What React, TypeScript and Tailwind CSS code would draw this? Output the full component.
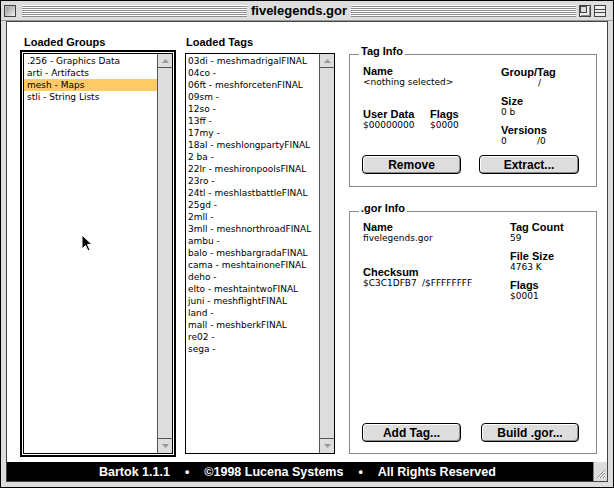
import React from 'react';

const groups = ['.256 - Graphics Data', 'arti - Artifacts', 'mesh - Maps', 'stli - String Lists'];

const tags = [
  '03di - meshmadrigalFINAL', '04co -', '06ft - meshforcetenFINAL', '09sm -', '12so -', '13ff -', '17my -',
  '18al - meshlongpartyFINAL', '2 ba -', '22lr - meshironpoolsFINAL', '23ro -', '24tl - meshlastbattleFINAL',
  '25gd -', '2mll -', '3mll - meshnorthroadFINAL', 'ambu -', 'balo - meshbargradaFINAL', 'cama - meshtainoneFINAL',
  'deho -', 'elto - meshtaintwoFINAL', 'juni - meshflightFINAL', 'land -', 'mall - meshberkFINAL', 're02 -', 'sega -',
];

const label = "font-['Liberation_Sans',Arial,sans-serif] font-bold text-[11px] leading-[11px] text-black whitespace-nowrap";
const value = "font-['DejaVu_Sans',sans-serif] text-[9px] leading-[10px] text-black whitespace-nowrap";

function Stripes() {
  return <div className="flex-1 h-[12px] bg-[repeating-linear-gradient(to_bottom,#ffffff_0_1px,#8c8c8c_1px_2px)]" />;
}

function TitleBar() {
  return (
    <div className="h-[20px] flex items-center pl-[3px] pr-[7px] border-b border-[#999]">
      <div className="w-[12px] h-[12px] border border-[#444] bg-[linear-gradient(135deg,#8f8f8f,#f4f4f4)] shadow-[inset_1px_1px_0_#bbbbbb]" />
      <div className="ml-[6px] flex-1 flex items-center">
        <Stripes />
        <span className="px-[4px] font-['Liberation_Sans',Arial,sans-serif] font-bold text-[13px] leading-[14px] text-black">
          fivelegends.gor
        </span>
        <Stripes />
      </div>
      <svg className="ml-[3px]" width="12" height="12" viewBox="0 0 12 12">
        <rect x="0.5" y="0.5" width="11" height="11" fill="#eeeeee" stroke="#444" />
        <rect x="1.5" y="1.5" width="6" height="6" fill="#dddddd" stroke="#444" />
        <path d="M2 10.5 H10.5 V2" fill="none" stroke="#888" />
      </svg>
      <svg className="ml-[3px]" width="12" height="12" viewBox="0 0 12 12">
        <rect x="0.5" y="0.5" width="11" height="11" fill="#eeeeee" stroke="#444" />
        <path d="M1 4.5 H11 M1 7.5 H11" stroke="#444" />
      </svg>
    </div>
  );
}

function Scrollbar() {
  return (
    <div className="w-[15px] border-l border-[#555] bg-[#dddddd] flex flex-col">
      <div className="h-[14px] border-b border-[#555] flex items-center justify-center">
        <svg width="7" height="4" viewBox="0 0 7 4"><path d="M3.5 0 L7 4 H0 Z" fill="#999" /></svg>
      </div>
      <div className="flex-1" />
      <div className="h-[15px] border-t border-[#555] flex items-center justify-center">
        <svg width="7" height="4" viewBox="0 0 7 4"><path d="M0 0 H7 L3.5 4 Z" fill="#999" /></svg>
      </div>
    </div>
  );
}

function MacButton({ text, w }: { text: string; w: string }) {
  return (
    <div
      className={`${w} h-[19px] rounded-[4px] border border-black bg-[#dddddd] shadow-[inset_1px_1px_0_#ffffff,inset_-1px_-1px_0_#8a8a8a] flex items-center justify-center font-['Liberation_Sans',Arial,sans-serif] font-bold text-[12px] text-black`}
    >
      {text}
    </div>
  );
}

function Field({ name, val, className = '' }: { name: string; val: React.ReactNode; className?: string }) {
  return (
    <div className={className}>
      <div className={label}>{name}</div>
      <div className={value}>{val}</div>
    </div>
  );
}

function GroupBox({ title, className, children }: { title: string; className: string; children: React.ReactNode }) {
  return (
    <div className={`relative border border-[#888] ${className}`}>
      <span className={`absolute -top-[9px] left-[9px] bg-white px-[2px] ${label}`}>{title}</span>
      {children}
    </div>
  );
}

export default function App() {
  return (
    <div className="w-[614px] h-[488px] bg-[#dddddd] border border-black flex flex-col select-none">
      <TitleBar />
      <div className="flex-1 mx-[5px] mb-[5px] border border-[#444] bg-white flex flex-col min-h-0">
        <div className="flex-1 flex pl-[13px] pt-[15px]">
          {/* Loaded Groups */}
          <div className="w-[156px] flex flex-col">
            <div className={`${label} ml-[4px]`}>Loaded Groups</div>
            <div className="mt-[2px] h-[407px] border-2 border-black p-[1px]">
              <div className="h-full border border-black flex">
                <div className="relative flex-1 pt-[1px]">
                  {groups.map(g => (
                    <div
                      key={g}
                      className={`h-[12px] pl-[3px] font-['DejaVu_Sans',sans-serif] text-[9px] leading-[12px] text-black whitespace-nowrap ${g.startsWith('mesh') ? 'bg-[#fdca66]' : ''}`}
                    >
                      {g}
                    </div>
                  ))}
                  <svg className="absolute left-[57px] top-[180px]" width="12" height="19" viewBox="0 0 12 19">
                    <path d="M1 1 V15 L4.5 11.5 L7 17 L9 16 L6.5 10.5 H11 Z" fill="#000" stroke="#fff" strokeWidth="1" strokeLinejoin="round" />
                  </svg>
                </div>
                <Scrollbar />
              </div>
            </div>
          </div>

          {/* Loaded Tags */}
          <div className="ml-[9px] w-[150px] flex flex-col">
            <div className={`${label} ml-[1px]`}>Loaded Tags</div>
            <div className="mt-[5px] h-[401px] border border-black flex">
              <div className="flex-1 pt-[1px]">
                {tags.map(t => (
                  <div key={t} className="h-[12px] pl-[2px] font-['DejaVu_Sans',sans-serif] text-[9px] leading-[12px] text-black whitespace-nowrap">
                    {t}
                  </div>
                ))}
              </div>
              <Scrollbar />
            </div>
          </div>

          {/* Info panels */}
          <div className="ml-[14px] w-[248px] pt-[17px] flex flex-col">
            <GroupBox title="Tag Info" className="h-[133px] pl-[13px] flex flex-col">
              <div className="flex">
                <div className="w-[138px]">
                  <Field name="Name" val="<nothing selected>" className="mt-[11px]" />
                  <div className="flex mt-[22px]">
                    <Field name="User Data" val="$00000000" className="w-[67px]" />
                    <Field name="Flags" val="$0000" />
                  </div>
                </div>
                <div>
                  <Field name="Group/Tag" val={<span className="ml-[37px]">/</span>} className="mt-[12px]" />
                  <Field name="Size" val="0 b" className="mt-[8px]" />
                  <Field name="Versions" val={<span className="flex"><span className="w-[36px]">0</span>/0</span>} className="mt-[8px]" />
                </div>
              </div>
              <div className="flex mt-[9px] -ml-[1px] gap-[18px]">
                <MacButton text="Remove" w="w-[99px]" />
                <MacButton text="Extract..." w="w-[100px]" />
              </div>
            </GroupBox>

            <GroupBox title=".gor Info" className="mt-[24px] h-[243px] pl-[13px] pb-[11px] flex flex-col">
              <div className="flex">
                <div className="w-[147px]">
                  <Field name="Name" val="fivelegends.gor" className="mt-[10px]" />
                  <Field
                    name="Checksum"
                    val={<span className="flex"><span className="w-[59px]">$C3C1DFB7</span>/$FFFFFFFF</span>}
                    className="mt-[24px]"
                  />
                </div>
                <div>
                  <Field name="Tag Count" val="59" className="mt-[10px]" />
                  <Field name="File Size" val="4763 K" className="mt-[8px]" />
                  <Field name="Flags" val="$0001" className="mt-[8px]" />
                </div>
              </div>
              <div className="flex mt-auto -ml-[1px] gap-[20px]">
                <MacButton text="Add Tag..." w="w-[99px]" />
                <MacButton text="Build .gor..." w="w-[98px]" />
              </div>
            </GroupBox>
          </div>
        </div>

        {/* Status bar */}
        <div className="h-[19px] bg-black flex items-center">
          <div className="pl-[92px] flex gap-[15px] font-['Liberation_Sans',Arial,sans-serif] font-bold text-[12.5px] leading-[14px] text-white whitespace-nowrap">
            <span>Bartok 1.1.1</span>
            <span>•</span>
            <span>©1998 Lucena Systems</span>
            <span>•</span>
            <span>All Rights Reserved</span>
          </div>
          <div className="ml-auto w-[14px] h-full bg-[#dddddd] border-l border-[#888]">
            <svg width="13" height="19" viewBox="0 0 13 19">
              <path d="M3 16 L11 8 M6 16 L11 11 M9 16 L11 14" stroke="#888" strokeWidth="1" />
              <path d="M4 16 L11 9 M7 16 L11 12 M10 16 L11 15" stroke="#fff" strokeWidth="1" />
            </svg>
          </div>
        </div>
      </div>
    </div>
  );
}
